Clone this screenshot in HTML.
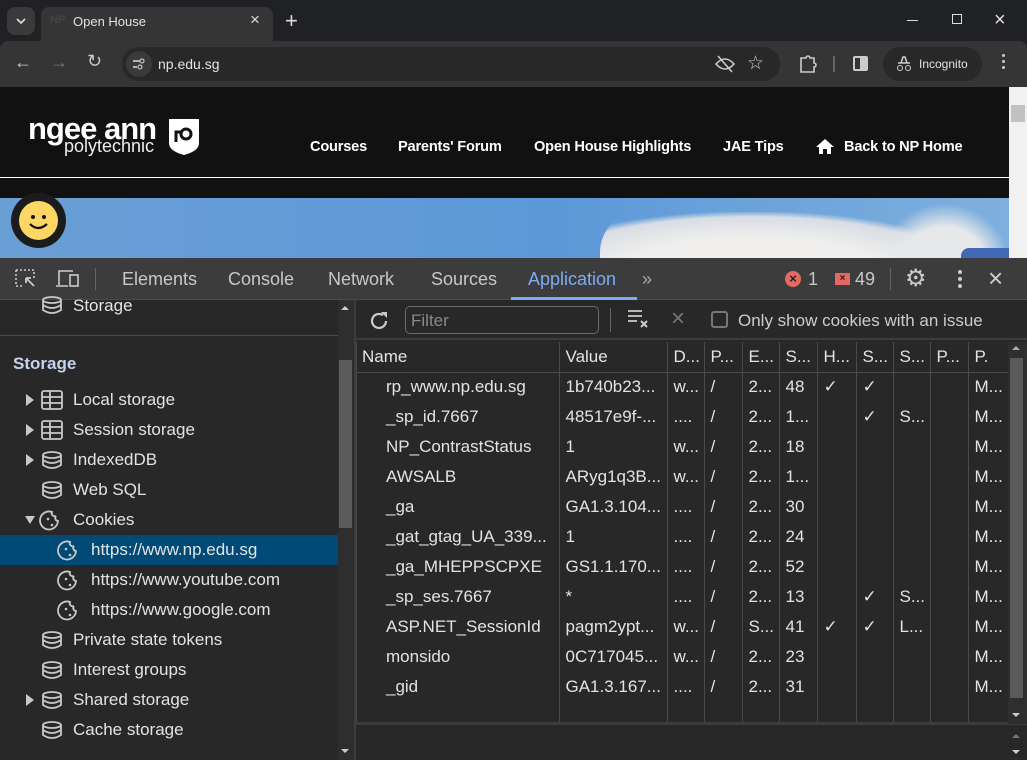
<!DOCTYPE html>
<html><head><meta charset="utf-8"><style>
*{box-sizing:border-box;margin:0;padding:0}
body{width:1027px;height:760px;overflow:hidden;background:#202124;font-family:"Liberation Sans",sans-serif;position:relative;color:#e3e3e3}
.a{position:absolute}
.nav{color:#fff;font-weight:bold;font-size:14.6px;top:139px;letter-spacing:-0.2px}
.dt{font-size:18px;color:#c8c8c8;top:269px}
.sb{font-size:17px;color:#e3e3e3;left:73px;white-space:nowrap}
table{border-collapse:collapse;table-layout:fixed;font-size:17px;color:#e3e3e3}
td{height:30px;padding:0 6px;white-space:nowrap;overflow:hidden;border-right:1px solid #4a4a4a}
tr.h td{border-bottom:1px solid #4a4a4a}
td.n{padding-left:30px}
</style></head><body>
<!-- tab strip -->
<div class="a" style="left:7px;top:7px;width:28px;height:28px;border-radius:8px;background:#3a3a3a"></div>
<svg class="a" style="left:14px;top:14px" width="14" height="14"><path d="M3 5l4 4 4-4" stroke="#ddd" stroke-width="1.6" fill="none"/></svg>
<div class="a" style="left:41px;top:7px;width:232px;height:34px;background:#353535;border-radius:8px 8px 0 0"></div>
<div class="a" style="left:50px;top:14px;font-size:11px;color:#444;font-weight:bold">NP</div>
<div class="a" style="left:73px;top:14px;font-size:13px;color:#e3e3e3">Open House</div>
<div class="a" style="left:250px;top:10px;font-size:17px;color:#ddd">×</div>
<div class="a" style="left:285px;top:8px;font-size:22px;color:#ddd">+</div>
<div class="a" style="left:907px;top:20px;width:11px;height:1px;background:#ddd"></div>
<div class="a" style="left:952px;top:14px;width:10px;height:10px;border:1px solid #ddd"></div>
<div class="a" style="left:994px;top:9px;font-size:20px;color:#ddd">×</div>
<!-- toolbar -->
<div class="a" style="left:0;top:41px;width:1027px;height:46px;background:#353535;border-radius:8px 8px 0 0"></div>
<div class="a" style="left:14px;top:52px;font-size:18px;color:#ccc">←</div>
<div class="a" style="left:50px;top:52px;font-size:18px;color:#777">→</div>
<div class="a" style="left:87px;top:51px;font-size:18px;color:#ccc">↻</div>
<div class="a" style="left:122px;top:47px;width:658px;height:34px;border-radius:17px;background:#282828"></div>
<div class="a" style="left:126px;top:51px;width:26px;height:26px;border-radius:13px;background:#3a3a3a"></div>
<svg class="a" style="left:132px;top:57px" width="14" height="14"><path d="M1 4h7M1 10h4" stroke="#ddd" stroke-width="1.5"/><circle cx="10" cy="4" r="2" stroke="#ddd" fill="none"/><circle cx="8" cy="10" r="2" stroke="#ddd" fill="none"/></svg>
<div class="a" style="left:158px;top:56px;font-size:14px;color:#e3e3e3">np.edu.sg</div>
<svg class="a" style="left:714px;top:54px" width="22" height="20"><path d="M2 10q9-10 18 0q-9 10-18 0z" stroke="#ccc" stroke-width="1.6" fill="none"/><path d="M4 2l14 16" stroke="#ccc" stroke-width="1.6"/></svg>
<div class="a" style="left:747px;top:52px;font-size:19px;color:#ccc">☆</div>
<svg class="a" style="left:798px;top:54px" width="20" height="20"><path d="M3 4h5a2 2 0 014 0h4v5a2 2 0 010 4v5H3z" stroke="#ccc" stroke-width="1.6" fill="none"/></svg>
<div class="a" style="left:833px;top:56px;width:2px;height:16px;background:#666"></div>
<div class="a" style="left:853px;top:56px;width:15px;height:15px;border:2px solid #ccc;border-radius:2px"></div>
<div class="a" style="left:860px;top:57px;width:6px;height:13px;background:#ccc"></div>
<div class="a" style="left:883px;top:47px;width:99px;height:34px;border-radius:17px;background:#282828"></div>
<svg class="a" style="left:895px;top:55px" width="18" height="18"><path d="M3 8h12M6 8l2-6h2l2 6" stroke="#ccc" stroke-width="1.6" fill="none"/><circle cx="5" cy="13" r="2.5" stroke="#ccc" fill="none"/><circle cx="13" cy="13" r="2.5" stroke="#ccc" fill="none"/></svg>
<div class="a" style="left:919px;top:57px;font-size:12px;color:#e3e3e3">Incognito</div>
<div class="a" style="left:1002px;top:54px;width:3px;height:3px;background:#ccc;box-shadow:0 6px #ccc,0 12px #ccc;border-radius:2px"></div>
<!-- page -->
<div class="a" style="left:0;top:87px;width:1009px;height:111px;background:#111"></div>
<div class="a" style="left:0;top:177px;width:1009px;height:1px;background:#fff"></div>
<div class="a" style="left:28px;top:111px;font-size:31px;font-weight:bold;color:#fff;letter-spacing:-1px">ngee ann</div>
<div class="a" style="left:64px;top:136px;font-size:18px;color:#eee">polytechnic</div>
<svg class="a" style="left:168px;top:118px" width="32" height="38"><path d="M1 1h30v24q0 8-15 12q-15-4-15-12z" fill="#fff"/><circle cx="18" cy="16" r="5" stroke="#111" stroke-width="3" fill="none"/><path d="M8 24v-10h6" stroke="#111" stroke-width="3" fill="none"/></svg>
<div class="a nav" style="left:310px">Courses</div>
<div class="a nav" style="left:398px">Parents' Forum</div>
<div class="a nav" style="left:534px">Open House Highlights</div>
<div class="a nav" style="left:723px">JAE Tips</div>
<svg class="a" style="left:815px;top:138px" width="20" height="17"><path d="M10 1l9 8h-3v7h-4v-5h-4v5H4V9H1z" fill="#fff"/></svg>
<div class="a nav" style="left:844px">Back to NP Home</div>
<div class="a" style="left:0;top:198px;width:1009px;height:60px;background:linear-gradient(90deg,#6a9fd6,#5c98d8 55%,#7fb0de)"></div>
<div class="a" style="left:600px;top:212px;width:380px;height:60px;border-radius:40px 40px 0 0;background:radial-gradient(ellipse at 40% 100%,#f0efee 40%,#d8dde4 65%,rgba(220,225,235,0) 72%)"></div>
<div class="a" style="left:880px;top:205px;width:129px;height:60px;border-radius:40px 40px 0 0;background:radial-gradient(ellipse at 50% 100%,#e6e8ea 45%,rgba(220,225,235,0) 72%)"></div>
<div class="a" style="left:961px;top:248px;width:48px;height:12px;background:#4169b8;border-radius:8px 0 0 0"></div>
<div class="a" style="left:11px;top:193px;width:55px;height:55px;border-radius:50%;background:#1c1c1c"></div>
<div class="a" style="left:19px;top:201px;width:39px;height:39px;border-radius:50%;background:#fdd663"></div>
<svg class="a" style="left:19px;top:201px" width="39" height="39"><circle cx="14" cy="16" r="2" fill="#111"/><circle cx="25" cy="16" r="2" fill="#111"/><path d="M11 23q8 8 17 0" stroke="#111" stroke-width="2.2" fill="none"/></svg>
<div class="a" style="left:1009px;top:87px;width:18px;height:171px;background:#f1f1f1"></div>
<div class="a" style="left:1011px;top:105px;width:14px;height:17px;background:#c1c1c1"></div>
<!-- devtools toolbar -->
<div class="a" style="left:0;top:258px;width:1027px;height:42px;background:#3c3c3c;border-bottom:1px solid #4a4a4a"></div>
<svg class="a" style="left:14px;top:268px" width="24" height="22"><path d="M2 2h18v8M2 2v16h8" stroke="#ccc" stroke-width="1.6" stroke-dasharray="2 2" fill="none"/><path d="M12 10l8 8M12 10h5M12 10v5" stroke="#ccc" stroke-width="1.8" fill="none"/></svg>
<svg class="a" style="left:55px;top:268px" width="26" height="22"><path d="M4 17V3h14M1 18h12" stroke="#ccc" stroke-width="1.6" fill="none"/><rect x="15" y="7" width="8" height="11" stroke="#ccc" stroke-width="1.6" fill="none"/></svg>
<div class="a" style="left:95px;top:268px;width:1px;height:22px;background:#666"></div>
<div class="a dt" style="left:122px">Elements</div>
<div class="a dt" style="left:228px">Console</div>
<div class="a dt" style="left:328px">Network</div>
<div class="a dt" style="left:431px">Sources</div>
<div class="a dt" style="left:528px;color:#7cacf8">Application</div>
<div class="a" style="left:511px;top:297px;width:126px;height:3px;background:#7cacf8"></div>
<div class="a dt" style="left:642px;color:#aaa">»</div>
<div class="a" style="left:785px;top:271px;width:16px;height:16px;border-radius:50%;background:#e46962;color:#222;font-size:13px;line-height:16px;text-align:center;font-weight:bold">×</div>
<div class="a dt" style="left:808px">1</div>
<div class="a" style="left:835px;top:273px;width:15px;height:12px;background:#e46962;color:#222;font-size:10px;line-height:12px;text-align:center;font-weight:bold">×</div>
<div class="a dt" style="left:855px">49</div>
<div class="a" style="left:890px;top:268px;width:1px;height:22px;background:#666"></div>
<div class="a" style="left:905px;top:264px;font-size:24px;color:#ccc">⚙</div>
<div class="a" style="left:958px;top:270px;width:4px;height:4px;border-radius:2px;background:#ccc;box-shadow:0 7px #ccc,0 14px #ccc"></div>
<div class="a" style="left:988px;top:263px;font-size:26px;color:#ccc">×</div>
<!-- sidebar -->
<div class="a" style="left:0;top:300px;width:338px;height:460px;background:#282828"></div>
<div class="a" style="left:0;top:335px;width:338px;height:1px;background:#4a4a4a"></div>
<div class="a" style="left:338px;top:300px;width:16px;height:460px;background:#2e2e2e"></div>
<div class="a" style="left:339px;top:360px;width:13px;height:168px;background:#5a5a5a"></div>
<div class="a" style="left:341px;top:306px;border-left:4px solid transparent;border-right:4px solid transparent;border-bottom:4px solid #ccc"></div>
<div class="a" style="left:341px;top:749px;border-left:4px solid transparent;border-right:4px solid transparent;border-top:4px solid #ccc"></div>
<div class="a" style="left:354px;top:300px;width:2px;height:460px;background:#3c3c3c"></div>
<div class="a" style="left:13px;top:354px;font-size:17px;color:#c3d3f0;font-weight:bold">Storage</div>
<div class="a" style="left:0;top:535px;width:338px;height:30px;background:#004a77"></div>
<svg class="a" style="left:0;top:290px" width="338" height="470">
<g stroke="#c8c8c8" stroke-width="1.8" fill="none">
<g id="db"><ellipse cx="52" cy="10" rx="9" ry="3"/><path d="M43 10v10q9 6 18 0V10M43 15q9 6 18 0"/></g>
<rect x="42" y="101" width="20" height="18" rx="2"/><path d="M42 107h20M42 113h20M50 101v18"/>
<rect x="42" y="131" width="20" height="18" rx="2"/><path d="M42 137h20M42 143h20M50 131v18"/>
<use href="#db" y="155"/><use href="#db" y="185"/>
<use href="#db" y="335"/><use href="#db" y="365"/><use href="#db" y="395"/><use href="#db" y="425"/>
<g id="ck"><path d="M58 231a9 9 0 1 1-6-9a3 3 0 0 0 4 4a3 3 0 0 0 2 5z"/></g>
<use href="#ck" x="18" y="30"/><use href="#ck" x="18" y="60"/><use href="#ck" x="18" y="90"/>
</g>
<g fill="#c8c8c8"><circle cx="48" cy="229" r="1.3"/><circle cx="52" cy="235" r="1.3"/><circle cx="66" cy="259" r="1.3"/><circle cx="70" cy="265" r="1.3"/><circle cx="66" cy="289" r="1.3"/><circle cx="70" cy="295" r="1.3"/><circle cx="66" cy="319" r="1.3"/><circle cx="70" cy="325" r="1.3"/>
<path d="M26 104l8 6-8 6zM26 134l8 6-8 6zM26 164l8 6-8 6zM26 404l8 6-8 6zM25 226l10 0-5 8z"/></g>
</svg>
<div class="a sb" style="top:296px">Storage</div>
<div class="a sb" style="top:390px">Local storage</div>
<div class="a sb" style="top:420px">Session storage</div>
<div class="a sb" style="top:450px">IndexedDB</div>
<div class="a sb" style="top:480px">Web SQL</div>
<div class="a sb" style="top:510px">Cookies</div>
<div class="a sb" style="top:540px;left:91px">https://www.np.edu.sg</div>
<div class="a sb" style="top:570px;left:91px">https://www.youtube.com</div>
<div class="a sb" style="top:600px;left:91px">https://www.google.com</div>
<div class="a sb" style="top:630px">Private state tokens</div>
<div class="a sb" style="top:660px">Interest groups</div>
<div class="a sb" style="top:690px">Shared storage</div>
<div class="a sb" style="top:720px">Cache storage</div>
<!-- main panel -->
<div class="a" style="left:356px;top:300px;width:671px;height:460px;background:#282828"></div>
<div class="a" style="left:356px;top:300px;width:671px;height:40px;background:#282828;border-bottom:2px solid #3c3c3c"></div>
<svg class="a" style="left:367px;top:309px" width="24" height="24"><path d="M19 12a7 7 0 1 1-3-5.8" stroke="#ccc" stroke-width="2.2" fill="none"/><path d="M14 3h6v6z" fill="#ccc"/></svg>
<div class="a" style="left:405px;top:306px;width:194px;height:28px;border:1px solid #6b6b6b;border-radius:5px;font-size:17px;color:#8a8a8a;padding:4px 5px">Filter</div>
<div class="a" style="left:610px;top:308px;width:1px;height:24px;background:#666"></div>
<svg class="a" style="left:627px;top:308px" width="24" height="22"><path d="M1 3h14M1 8h14M1 13h9" stroke="#ccc" stroke-width="1.8"/><path d="M14 13l6 6M20 13l-6 6" stroke="#ccc" stroke-width="2"/></svg>
<div class="a" style="left:671px;top:305px;font-size:24px;color:#777">×</div>
<div class="a" style="left:711px;top:311px;width:17px;height:17px;border:2px solid #777;border-radius:3px"></div>
<div class="a" style="left:738px;top:311px;font-size:17px;color:#ccc">Only show cookies with an issue</div>
<div class="a" style="left:356px;top:342px;width:652px;height:380px;overflow:hidden">
<table style="width:652px">
<colgroup><col style="width:203px"><col style="width:108px"><col style="width:37px"><col style="width:38px"><col style="width:37px"><col style="width:38px"><col style="width:39px"><col style="width:37px"><col style="width:37px"><col style="width:38px"><col style="width:40px"></colgroup>
<tr class="h"><td>Name</td><td>Value</td><td>D...</td><td>P...</td><td>E...</td><td>S...</td><td>H...</td><td>S...</td><td>S...</td><td>P...</td><td>P.</td></tr>
<tr><td class="n">rp_www.np.edu.sg</td><td>1b740b23...</td><td>w...</td><td>/</td><td>2...</td><td>48</td><td>✓</td><td>✓</td><td></td><td></td><td>M...</td></tr>
<tr><td class="n">_sp_id.7667</td><td>48517e9f-...</td><td>....</td><td>/</td><td>2...</td><td>1...</td><td></td><td>✓</td><td>S...</td><td></td><td>M...</td></tr>
<tr><td class="n">NP_ContrastStatus</td><td>1</td><td>w...</td><td>/</td><td>2...</td><td>18</td><td></td><td></td><td></td><td></td><td>M...</td></tr>
<tr><td class="n">AWSALB</td><td>ARyg1q3B...</td><td>w...</td><td>/</td><td>2...</td><td>1...</td><td></td><td></td><td></td><td></td><td>M...</td></tr>
<tr><td class="n">_ga</td><td>GA1.3.104...</td><td>....</td><td>/</td><td>2...</td><td>30</td><td></td><td></td><td></td><td></td><td>M...</td></tr>
<tr><td class="n">_gat_gtag_UA_339...</td><td>1</td><td>....</td><td>/</td><td>2...</td><td>24</td><td></td><td></td><td></td><td></td><td>M...</td></tr>
<tr><td class="n">_ga_MHEPPSCPXE</td><td>GS1.1.170...</td><td>....</td><td>/</td><td>2...</td><td>52</td><td></td><td></td><td></td><td></td><td>M...</td></tr>
<tr><td class="n">_sp_ses.7667</td><td>*</td><td>....</td><td>/</td><td>2...</td><td>13</td><td></td><td>✓</td><td>S...</td><td></td><td>M...</td></tr>
<tr><td class="n">ASP.NET_SessionId</td><td>pagm2ypt...</td><td>w...</td><td>/</td><td>S...</td><td>41</td><td>✓</td><td>✓</td><td>L...</td><td></td><td>M...</td></tr>
<tr><td class="n">monsido</td><td>0C717045...</td><td>w...</td><td>/</td><td>2...</td><td>23</td><td></td><td></td><td></td><td></td><td>M...</td></tr>
<tr><td class="n">_gid</td><td>GA1.3.167...</td><td>....</td><td>/</td><td>2...</td><td>31</td><td></td><td></td><td></td><td></td><td>M...</td></tr>
<tr><td style="height:60px"></td><td></td><td></td><td></td><td></td><td></td><td></td><td></td><td></td><td></td><td></td></tr>
</table></div>
<div class="a" style="left:356px;top:342px;width:1px;height:382px;background:#4a4a4a"></div>
<div class="a" style="left:356px;top:722px;width:671px;height:3px;background:#3c3c3c"></div>
<div class="a" style="left:1008px;top:342px;width:19px;height:382px;background:#2e2e2e"></div>
<div class="a" style="left:1010px;top:358px;width:13px;height:340px;background:#5a5a5a"></div>
<div class="a" style="left:1012px;top:346px;border-left:4px solid transparent;border-right:4px solid transparent;border-bottom:4px solid #aaa"></div>
<div class="a" style="left:1012px;top:713px;border-left:4px solid transparent;border-right:4px solid transparent;border-top:4px solid #ccc"></div>
<div class="a" style="left:1012px;top:734px;border-left:4px solid transparent;border-right:4px solid transparent;border-bottom:4px solid #777"></div>
<div class="a" style="left:1012px;top:750px;border-left:4px solid transparent;border-right:4px solid transparent;border-top:4px solid #ccc"></div>
</body></html>
